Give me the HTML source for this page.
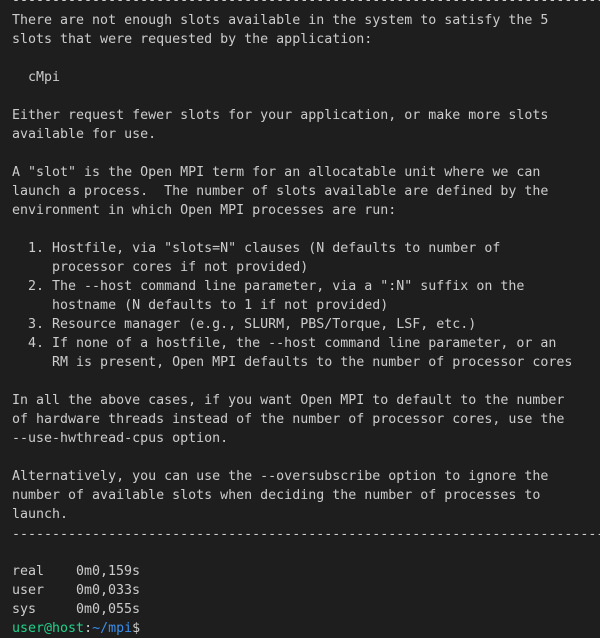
<!DOCTYPE html>
<html><head><meta charset="utf-8"><style>
html,body{margin:0;padding:0;background:#1e1e1e;width:600px;height:622px;overflow:hidden}
pre{margin:0;position:absolute;left:12px;top:-8px;width:588px;overflow:hidden;font-family:"DejaVu Sans Mono","Liberation Mono",monospace;font-size:13.3px;line-height:19px;color:#cccccc;white-space:pre}
.g{color:#23d18b}.b{color:#3b8eea}
.d{position:relative;top:1px}
.d0{position:relative;top:-1px}
.t{display:inline-block;width:64px}
</style></head><body><pre><span class="d0">--------------------------------------------------------------------------</span>
There are not enough slots available in the system to satisfy the 5
slots that were requested by the application:

  cMpi

Either request fewer slots for your application, or make more slots
available for use.

A "slot" is the Open MPI term for an allocatable unit where we can
launch a process.  The number of slots available are defined by the
environment in which Open MPI processes are run:

  1. Hostfile, via "slots=N" clauses (N defaults to number of
     processor cores if not provided)
  2. The --host command line parameter, via a ":N" suffix on the
     hostname (N defaults to 1 if not provided)
  3. Resource manager (e.g., SLURM, PBS/Torque, LSF, etc.)
  4. If none of a hostfile, the --host command line parameter, or an
     RM is present, Open MPI defaults to the number of processor cores

In all the above cases, if you want Open MPI to default to the number
of hardware threads instead of the number of processor cores, use the
--use-hwthread-cpus option.

Alternatively, you can use the --oversubscribe option to ignore the
number of available slots when deciding the number of processes to
launch.
<span class="d">--------------------------------------------------------------------------</span>

<span class="t">real</span>0m0,159s
<span class="t">user</span>0m0,033s
<span class="t">sys</span>0m0,055s
<span class="g">user@host</span>:<span class="b">~/mpi</span>$ </pre></body></html>
